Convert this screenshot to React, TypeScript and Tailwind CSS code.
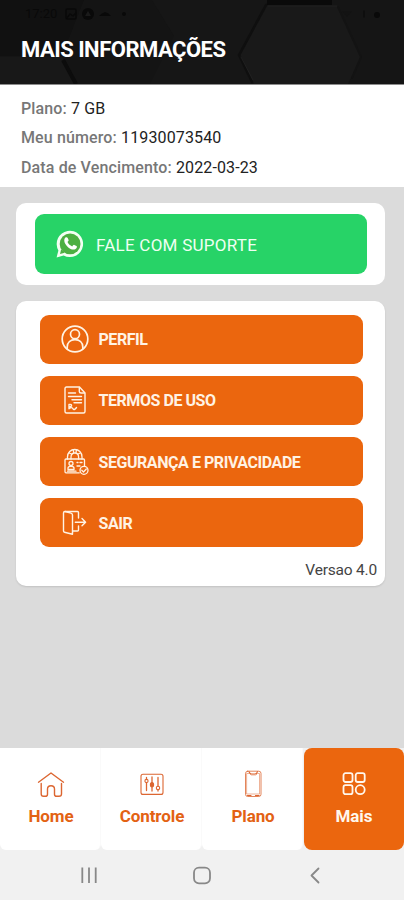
import type { ReactNode } from "react";

const stroke = {
  fill: "none",
  stroke: "currentColor",
  strokeLinecap: "round",
  strokeLinejoin: "round",
} as const;

function HeaderPattern() {
  return (
    <svg className="absolute inset-0 h-full w-full" viewBox="0 0 404 84" preserveAspectRatio="none">
      <path d="M0 0H84L62 56H0Z" fill="#111111" />
      <path d="M0 57H62L76 84H0Z" fill="#181818" />
      <path d="M84 0H152L174 36L150 84H78L62 56Z" fill="#141414" />
      <path d="M63 60L76 84" stroke="#0c0c0c" strokeWidth="4" />
      <path d="M152 0H268L240 56L252 84H150L174 36Z" fill="#161616" />
      <path d="M267 0H332V5H267Z" fill="#0a0a0a" />
      <path d="M267 6H338L361 57L348 84H254L240 56Z" fill="#191919" />
      <path d="M266 5L239 55L252 82" {...stroke} stroke="#0f0f0f" strokeWidth="2.5" />
      <path d="M241 57L253 80M268 6H337" {...stroke} stroke="#202020" />
      <path d="M338 7L361 57L352 78" {...stroke} stroke="#131313" strokeWidth="2" />
    </svg>
  );
}

function StatusBar() {
  return (
    <div className="absolute inset-x-0 top-1 flex h-5 items-center pl-[25px] text-[13px] text-[#090909]">
      <span>17:20</span>
      <svg className="ml-2" width="66" height="14" viewBox="0 0 66 14">
        <rect x="1" y="2" width="10" height="10" rx="1" {...stroke} strokeWidth="1.5" />
        <path d="M2 11L5 7L8 9L11 6" {...stroke} strokeWidth="1.5" />
        <circle cx="23" cy="7" r="6" fill="currentColor" />
        <path d="M20 9L23 4L26 9Z" fill="#1a1a1a" />
        <path d="M34 9Q37 6 40 5Q44 6 46 9Z" fill="currentColor" />
        <circle cx="59" cy="7" r="2" fill="currentColor" />
      </svg>
      <svg className="ml-auto mr-5" width="44" height="12" viewBox="0 0 44 12">
        <path d="M2 3H12L7 9Z" fill="#131313" />
        <path d="M24 3V9" {...stroke} />
        <circle cx="37" cy="7" r="3" fill="currentColor" />
      </svg>
    </div>
  );
}

function WhatsappIcon() {
  return (
    <svg width="28" height="28" viewBox="0 0 28 28">
      <path
        d="M0.6 27.4L2.4 20.4A13.2 13.2 0 1 1 7.6 25.5Z"
        fill="#f2fff2"
      />
      <circle cx="14.1" cy="13.9" r="10.4" fill="#4caf42" />
      <path d="M4 24L5.2 19.2L8.8 22.7Z" fill="#4caf42" />
      <path
        d="M9.4 7.6C10.2 6.9 11.3 7 11.7 7.9L12.6 10C12.9 10.7 12 11.4 11.5 12.1C12.5 14.2 14.2 15.6 16.2 16.4C17 15.8 17.4 14.5 18.3 14.9L20.5 16C21.2 16.4 21 17.4 20.4 18.2C18.9 20.3 15.7 20 12.3 17.4C9.1 14.8 6.8 10.3 9.4 7.6Z"
        fill="#fff"
      />
    </svg>
  );
}

function ProfileIcon() {
  return (
    <svg width="28" height="28" viewBox="0 0 28 28" {...stroke} strokeWidth="1.7">
      <circle cx="14" cy="14" r="12.8" />
      <circle cx="14" cy="9.2" r="4.5" />
      <path d="M6.2 23.7V22C6.2 17.4 9.6 14.6 14 14.6S21.8 17.4 21.8 22V23.7" />
    </svg>
  );
}

function TermsIcon() {
  return (
    <svg width="28" height="28" viewBox="0 0 28 28" {...stroke} strokeWidth="1.4">
      <path d="M5.5 1H18.5L24 7V25.5Q24 27 22.5 27H5.5Q4 27 4 25.5V2.5Q4 1 5.5 1Z" />
      <path d="M18.3 1.5V5.5Q18.3 7 20 7H23.5" />
      <path d="M7.5 7H14.5M7.5 10.5H20.5M11 13.7H20.5M13 16.7H20.5" />
      <path d="M8 18.5V22.7M8 18.5Q11 18 10.5 20.2L8 21.2M8 22.7Q11 20.5 12 22.7T15.5 21.5" />
    </svg>
  );
}

function SecurityIcon() {
  return (
    <svg width="28" height="28" viewBox="0 0 28 28" {...stroke} strokeWidth="1.3">
      <path d="M6.5 11V9C6.5 4.3 9.8 1.5 13.8 1.5S21 4.3 21 9V11" />
      <path d="M10 11V9.3C10 6.5 11.3 5 13.8 5S17.6 6.5 17.6 9.3V11" />
      <path d="M8.2 5L10.5 6M19.3 5L17 6M12.2 1.7L12.7 4.5M15.5 1.8L15 4.5" />
      <path d="M18.3 24.8H5Q4 24.8 4 23.8V12Q4 11 5 11H22.5Q23.5 11 23.5 12V18" />
      <circle cx="10" cy="15.5" r="2" />
      <path d="M7 21.5V20Q7 18.3 10 18.3T13 20V21.5ZM16 14.5H17M19 14.5H21M16 18H19M6.5 23.2H15" />
      <circle cx="23" cy="22.3" r="4" />
      <path d="M20.8 22.3L22.5 24L25.3 21" />
    </svg>
  );
}

function ExitIcon() {
  return (
    <svg width="28" height="28" viewBox="0 0 28 28" {...stroke} strokeWidth="1.4">
      <path d="M11.5 23.5V25.2L3.5 23.2Q2.5 23 2.5 22V4Q2.5 2.5 4 2.5H16.5Q17.5 2.5 17.5 3.5V9" />
      <path d="M4 2.5L10 4.2Q11.5 4.6 11.5 6V23.5M11.5 22H16.5Q17.5 22 17.5 21V17" />
      <path d="M14.3 13.2H24.5M21 9.6L24.6 13.2L21 16.8" />
    </svg>
  );
}

function HomeIcon() {
  return (
    <svg width="28" height="28" viewBox="0 0 28 28" {...stroke} strokeWidth="1.4">
      <path d="M1.5 12.2L14 3L26.5 12.2" />
      <path d="M4.2 13.5V24Q4.2 26.3 6.5 26.3H8.5Q10.5 26.3 10.5 24.2V19Q10.5 15.8 14 15.8T17.5 19V24.2Q17.5 26.3 19.5 26.3H22Q24.5 26.3 24.5 24V13.5" />
    </svg>
  );
}

function ControlIcon() {
  return (
    <svg width="28" height="28" viewBox="0 0 28 28" {...stroke} strokeWidth="1.1">
      <rect x="3" y="4.2" width="22" height="20.2" rx="2" />
      <path d="M8.5 7.5V9M8.5 13V20.5M14 7V21M20 7.5V16M20 20V21" strokeWidth="1.3" />
      <circle cx="8.5" cy="11" r="1.6" />
      <ellipse cx="14" cy="14.7" rx="1.6" ry="2.2" fill="currentColor" />
      <circle cx="20" cy="18" r="1.7" />
    </svg>
  );
}

function PhoneIcon() {
  return (
    <svg width="28" height="28" viewBox="0 0 28 28" {...stroke} strokeWidth="0.8">
      <rect x="6.5" y="1.2" width="15.5" height="25.3" rx="2.2" />
      <path d="M8 3.5H10.5L12 5H17L18.5 3.5H20.5V24H8Z" strokeWidth="0.5" />
      <path d="M10 1.7Q11 4 12.5 4H16Q17.8 4 18.5 1.7M8.5 25.5H12M16.5 25.5H20" strokeWidth="1.2" />
    </svg>
  );
}

function MoreIcon() {
  return (
    <svg width="28" height="28" viewBox="0 0 28 28" {...stroke} strokeWidth="1.8">
      <rect x="3.5" y="3.2" width="9" height="8.8" rx="2" />
      <rect x="15.7" y="3.2" width="9" height="8.8" rx="2" />
      <rect x="3.5" y="15.2" width="9" height="9" rx="2" />
      <circle cx="20.2" cy="19.7" r="4.5" />
    </svg>
  );
}

const details = [
  { label: "Plano:", value: "7 GB" },
  { label: "Meu número:", value: "11930073540" },
  { label: "Data de Vencimento:", value: "2022-03-23" },
];

const options: { label: string; icon: ReactNode }[] = [
  { label: "PERFIL", icon: <ProfileIcon /> },
  { label: "TERMOS DE USO", icon: <TermsIcon /> },
  { label: "SEGURANÇA E PRIVACIDADE", icon: <SecurityIcon /> },
  { label: "SAIR", icon: <ExitIcon /> },
];

const tabs: { label: string; icon: ReactNode; active?: boolean }[] = [
  { label: "Home", icon: <HomeIcon /> },
  { label: "Controle", icon: <ControlIcon /> },
  { label: "Plano", icon: <PhoneIcon /> },
  { label: "Mais", icon: <MoreIcon />, active: true },
];

export default function App() {
  return (
    <div className="flex h-[900px] w-[404px] flex-col overflow-hidden bg-[#dbdbdb] font-['Roboto',sans-serif]">
      <header className="relative h-[85px] shrink-0 border-b border-[#8c8c8c] bg-[#151515]">
        <HeaderPattern />
        <StatusBar />
        <h1 className="relative pl-[21px] pt-[34px] text-[22px] leading-8 font-bold tracking-[-0.5px] text-white">
          MAIS INFORMAÇÕES
        </h1>
      </header>

      <section className="h-[102px] shrink-0 bg-white pl-[21px] pt-[9px] text-[16px] leading-[29.3px] tracking-[0.13px]">
        {details.map((item) => (
          <p key={item.label}>
            <span className="font-medium text-[#777]">{item.label}</span>{" "}
            <span className="text-[#222]">{item.value}</span>
          </p>
        ))}
      </section>

      <main className="flex-1 pl-4 pr-[19px] pt-4">
        <div className="h-[82px] rounded-[10px] bg-white pl-[19px] pr-[18px] pt-[11px]">
          <button className="flex h-[60px] w-full items-center rounded-[9px] bg-[#27d367] pl-[21px] text-[17px] tracking-[0.25px] text-[#effff2]">
            <WhatsappIcon />
            <span className="ml-3 pt-[3px]">FALE COM SUPORTE</span>
          </button>
        </div>

        <div className="mt-4 h-[285px] rounded-[10px] bg-white pt-[13.5px] shadow-[0_1px_2px_rgba(0,0,0,0.12)]">
          <div className="flex flex-col gap-[12.3px] pl-[23.5px] pr-[22px]">
            {options.map((item) => (
              <button
                key={item.label}
                className="flex h-[49px] items-center rounded-[9px] bg-[#eb660e] pl-[21px] text-[16px] font-bold tracking-[-0.44px] text-[#fff3e4]"
              >
                {item.icon}
                <span className="ml-[10px] pt-[2px]">{item.label}</span>
              </button>
            ))}
          </div>
          <p className="mt-[11px] pr-2 text-right text-[15.5px] leading-6 tracking-[-0.2px] text-[#444]">Versao 4.0</p>
        </div>
      </main>

      <nav className="grid h-[102px] shrink-0 grid-cols-4 bg-[#f1f1f1]">
        {tabs.map((tab) => (
          <button
            key={tab.label}
            className={
              tab.active
                ? "ml-px flex flex-col items-center rounded-[8px] bg-[#eb660e] pt-[22px] text-[#fff7ed]"
                : "flex flex-col items-center rounded-b-[6px] border-r border-[#fafafa] bg-white pl-[2px] pt-[22px] text-[#dc6631]"
            }
          >
            {tab.icon}
            <span
              className={
                tab.active
                  ? "mt-[6px] text-[17px] leading-6 font-bold"
                  : "mt-[6px] text-[17px] leading-6 font-bold tracking-[-0.1px] text-[#e36213]"
              }
            >
              {tab.label}
            </span>
          </button>
        ))}
      </nav>

      <footer className="flex h-[50px] shrink-0 items-center justify-between bg-[#f1f1f1] pl-[79px] pr-[79px] text-[#888]">
        <svg width="20" height="20" viewBox="0 0 20 20" {...stroke} strokeWidth="1.8" strokeLinecap="butt">
          <path d="M3.3 2.5V18M10 2.5V18M16.7 2.5V18" />
        </svg>
        <svg width="20" height="20" viewBox="0 0 20 20" {...stroke} strokeWidth="1.8">
          <rect x="2" y="2.7" width="16" height="15.6" rx="5" />
        </svg>
        <svg width="20" height="20" viewBox="0 0 20 20" {...stroke} strokeWidth="1.8">
          <path d="M13.5 3.5L6.5 10.5L13.5 17.5" />
        </svg>
      </footer>
    </div>
  );
}
